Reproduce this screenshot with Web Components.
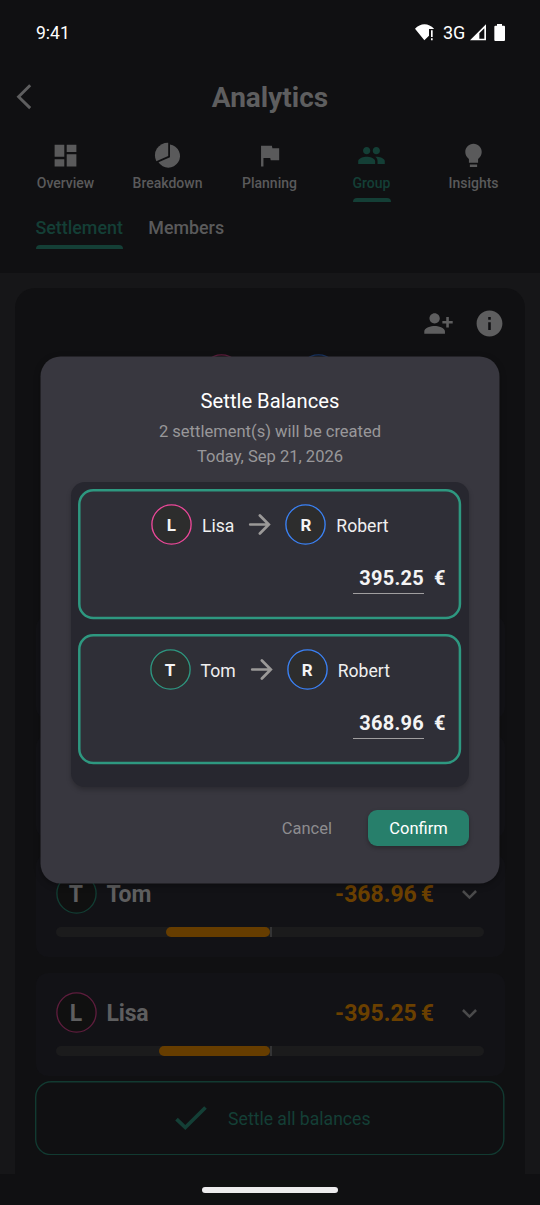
<!DOCTYPE html>
<html lang="en">
<head>
<meta charset="utf-8">
<title>Analytics</title>
<style>
html,body{margin:0;padding:0;background:#101012}
body{font-family:Roboto,"Liberation Sans",sans-serif;width:540px;height:1205px;overflow:hidden}
</style>
</head>
<body>
<analytics-screen></analytics-screen>
<script>
const define = (name, html, after) => customElements.define(name, class extends HTMLElement {
  constructor() {
    super();
    const t = document.createElement('template');
    t.innerHTML = '<style>*{box-sizing:border-box}svg{display:block;flex:none}</style>' + html;
    this.attachShadow({mode: 'open'}).append(t.content.cloneNode(true));
  }
  connectedCallback() { if (after) after(this, this.shadowRoot); }
});

const ICONS = {
  dashboard: ['0 0 24 24', '<path d="M3 13h8V3H3v10zm0 8h8v-6H3v6zm10 0h8V11h-8v10zm0-18v6h8V3h-8z"/>'],
  pie: ['459 34 87 87', '<path d="M504.500 39V79L469 95A38.5 38.5 0 0 1 504.500 39Z"/><path d="M510 44.500A35 35 0 1 1 475.500 98L510 82.500Z"/>'],
  flag: ['0 0 24 24', '<path d="M14.4 6L14 4H5v17h2v-7h5.6l.4 2h7V6z"/>'],
  people: ['0 0 24 24', '<path d="M16 11c1.66 0 2.99-1.34 2.99-3S17.66 5 16 5c-1.66 0-3 1.34-3 3s1.34 3 3 3zm-8 0c1.66 0 2.99-1.34 2.99-3S9.66 5 8 5C6.34 5 5 6.34 5 8s1.34 3 3 3zm0 2c-2.33 0-7 1.17-7 3.5V19h14v-2.5c0-2.33-4.67-3.5-7-3.5zm8 0c-.29 0-.62.02-.97.05 1.16.84 1.97 1.97 1.97 3.45V19h6v-2.5c0-2.33-4.67-3.5-7-3.5z"/>'],
  bulb: ['0 0 24 24', '<path d="M12 2.3C8.1 2.3 5.2 5.400 5.200 9.100c0 2.400 1.200 4.500 3 5.700V17.900h7.600V14.800c1.800-1.200 3-3.300 3-5.700C18.800 5.400 15.900 2.300 12 2.300zM9 19.500h6v2H9z"/>'],
  addPerson: ['0 0 24 24', '<path d="M13 8c0-2.210-1.790-4-4-4S5 5.790 5 8s1.790 4 4 4 4-1.790 4-4zm2 2v2h3v3h2v-3h3v-2h-3V7h-2v3h-3zM1 18v2h16v-2c0-2.660-5.330-4-8-4s-8 1.340-8 4z"/>'],
  info: ['0 0 24 24', '<path d="M12 2C6.480 2 2 6.480 2 12s4.480 10 10 10 10-4.480 10-10S17.520 2 12 2zm1 15h-2v-6h2v6zm0-8h-2V7h2v2z"/>'],
  arrow: ['0 0 24 24', '<path d="M4.800 12H19M12.300 5L19.200 12L12.300 19" fill="none" stroke="currentColor" stroke-width="2.100" stroke-linecap="round"/>'],
  check: ['0 0 40 40', '<path d="M5.500 21.200L14.300 29.500L34.500 9.500" fill="none" stroke="currentColor" stroke-width="3.700"/>'],
  chevron: ['0 0 24 24', '<path d="M4.500 8L12 15.500L19.500 8" fill="none" stroke="currentColor" stroke-width="2.900"/>']
};

define('ui-icon', `<style>:host{display:block;flex:none}</style><svg fill="currentColor"></svg>`, (el, r) => {
  const [box, art] = ICONS[el.getAttribute('name')];
  const svg = r.querySelector('svg'), s = el.getAttribute('size');
  svg.setAttribute('viewBox', box);
  svg.setAttribute('width', s);
  svg.setAttribute('height', s);
  svg.innerHTML = art;
});

define('status-bar', `<style>
:host{display:flex;height:65px;padding:0 35px 0 36px;align-items:center;justify-content:space-between;color:#fff;font-size:17.500px;flex:none}
.r{display:flex;align-items:center}
.n{margin:0 5px 0 9px;font-size:18px;width:22px}
</style>
<span>9:41</span>
<div class="r">
<svg width="19" height="17" viewBox="434 73 57 51" fill="#fff"><path d="M434 87C450 69 475 69 491 87L490 88H476V108L462 122Z"/><path d="M482 92h5v20h-5zM482 116h5v6h-5z"/></svg>
<span class="n">3G</span>
<svg width="16" height="17" viewBox="600 73 48 51" fill="#fff"><path fill-rule="evenodd" d="M600 122L648 74V122ZM628 101V117H643V86Z"/></svg>
<svg style="margin-left:8px" width="11" height="17" viewBox="673 72 33 51" fill="#fff"><path d="M682 72h15v5h6a3 3 0 0 1 3 3v40a3 3 0 0 1-3 3h-26a3 3 0 0 1-3-3v-40a3 3 0 0 1 3-3h5z"/></svg>
</div>`);

define('title-bar', `<style>
:host{display:grid;grid-template-columns:48px 1fr 48px;height:65px;align-items:center;flex:none;color:#5e5e5f}
h1{margin:0;font-size:28px;font-weight:700;text-align:center;line-height:34px}
</style>
<svg width="48" height="30" viewBox="0 0 48 30"><path d="M30.200 2.300L18.600 13.700L30.200 25.100" fill="none" stroke="currentColor" stroke-width="2.900"/></svg>
<h1><slot></slot></h1>`);

define('nav-tab', `<style>
:host{display:flex;flex-direction:column;align-items:center;color:#5a5a5b;width:102px}
:host([active]){color:#143f36}
span{font-size:14px;font-weight:500;line-height:16px;margin-top:5px}
i{height:4px;width:38px;margin-top:7px;border-radius:4px 4px 0 0}
:host([active]) i{background:#143f36}
</style><span><slot></slot></span><i></i>`, (el, r) => {
  const n = document.createElement('ui-icon');
  n.setAttribute('name', el.getAttribute('icon'));
  n.setAttribute('size', 29);
  r.querySelector('span').before(n);
});

define('sub-tab', `<style>
:host{display:flex;flex-direction:column;color:#5a5a5b;font-size:17.850px;font-weight:500;line-height:22px}
i{height:4px;margin-top:6px;border-radius:4px 4px 0 0}
:host([active]){color:#143f36}
:host([active]) i{background:#143f36}
</style><slot></slot><i></i>`);

define('user-avatar', `<style>
:host{display:grid;width:41px;height:41px;flex:none;color:#f4f4f4;place-items:center;font-weight:700;font-size:17px;--fill:#2d2d2d}
:host([dim]){--fill:#101010;color:#5e5e5f;font-size:23px}
svg,span{grid-area:1/1}
circle{fill:var(--fill);stroke:var(--ring)}
:host(:not([dim])) span{padding-top:1px}
:host([dim]) span{padding-top:1px}
</style><svg width="41" height="41"><circle cx="20.500" cy="20.500" r="19.600" stroke-width="1.350"/></svg><span><slot></slot></span>`);

define('member-card', `<style>
:host{display:block;height:103px;margin-bottom:16px;border-radius:12px;background:#121216;padding:19px 20px 0;flex:none}
.row{display:flex;align-items:center;height:41px;color:#5e5e5f;font-size:23px;font-weight:700}
.row user-avatar{margin-left:-.500px}
.name{margin-left:10px;flex:1;padding-top:1px;letter-spacing:-.2px}
.amt{color:#6b4000;display:flex;gap:4px;margin-right:24.500px;padding-top:1px}
ui-icon{color:#4a4a4b;margin:1px 5px 0 0}
.bar{display:grid;grid-template-columns:214px 1fr;height:10px;margin-top:13px;border-radius:5px;background:#1b1b1c;width:428px}
.fill{justify-self:end;height:10px;border-radius:5px;background:#663d00}
.mid{width:1.500px;height:10px;background:#343435}
</style>
<div class="row"><user-avatar dim></user-avatar><span class="name"></span><span class="amt"><span class="num"></span><span>€</span></span><ui-icon name="chevron" size="21"></ui-icon></div>
<div class="bar"><div class="fill"></div><div class="mid"></div></div>`, (el, r) => {
  const name = el.getAttribute('name');
  if (!name) { r.querySelectorAll('div').forEach(d => d.remove()); return; }
  r.querySelector('.name').textContent = name;
  r.querySelector('.num').textContent = el.getAttribute('amount');
  const a = r.querySelector('user-avatar');
  a.textContent = name[0];
  a.style.setProperty('--ring', el.getAttribute('ring'));
  r.querySelector('.fill').style.width = el.getAttribute('fill') + 'px';
});

define('settle-card', `<style>
:host{display:block;position:relative;height:130.400px;padding:15px 15.500px 0;margin-bottom:14.600px}
.frame{position:absolute;left:0;top:0;width:100%;height:100%}
.frame rect{x:1.300px;y:1.300px;width:calc(100% - 2.600px);height:calc(100% - 2.600px);rx:14px;fill:#2f2f37;stroke:#2e9880;stroke-width:2.500px}
.row{position:relative;display:flex;align-items:center;justify-content:center;gap:10px;color:#f0f0f0;font-size:17.600px;margin-right:.5px}
ui-icon{color:#9b9998}
.name{padding-top:2px;white-space:nowrap}
.amount{position:relative;display:flex;justify-content:flex-end;font-size:20px;font-weight:700;color:#f4f4f4;line-height:28px;margin-top:18.500px;letter-spacing:.3px}
.field{width:71px;text-align:right;border-bottom:1px solid #a09e9f;height:30px}
.cur{margin-left:10px;width:12px}
</style>
<svg class="frame"><rect/></svg>
<div class="row"><user-avatar></user-avatar><span class="name"></span><ui-icon name="arrow" size="31"></ui-icon><user-avatar style="--ring:#3b82f6">R</user-avatar><span class="name">Robert</span></div>
<div class="amount"><span class="field"></span><span class="cur">€</span></div>`, (el, r) => {
  const name = el.getAttribute('name'), a = r.querySelector('user-avatar');
  r.querySelector('.name').textContent = name;
  a.textContent = name[0];
  a.style.setProperty('--ring', el.getAttribute('ring'));
  r.querySelector('.field').textContent = el.getAttribute('amount');
});

define('settle-dialog', `<style>
:host{display:block;position:absolute;left:40px;top:356px;width:460px;height:528px;padding:33px 31px 0}
.panel{position:absolute;left:0;top:0;width:100%;height:100%;filter:drop-shadow(0 2px 3px rgba(0,0,0,.3))}
.panel rect{x:.5px;y:.5px;width:459px;height:527px;rx:20px;fill:#38373f}
h2,p,.list,.actions{position:relative}
h2{margin:0;font-size:20.200px;font-weight:400;line-height:25px;color:#fff;text-align:center}
p{margin:5px 0 0;font-size:16.550px;line-height:25px;color:#98979a;text-align:center}
.list{margin-top:13px;height:304.500px;border-radius:14px;background:#27272f;padding:7.400px;box-shadow:0 3px 5px rgba(0,0,0,.22)}
.actions{display:flex;justify-content:flex-end;align-items:center;margin-top:23.500px;font-size:16.500px}
.cancel{color:#8d8c8f;margin-right:36px;padding-top:2px}
.ok{width:101px;height:35.500px;border-radius:9px;background:#277f6b;color:#fff;display:flex;align-items:center;justify-content:center;padding-top:2px;box-shadow:0 2px 4px rgba(0,0,0,.28)}
</style>
<svg class="panel"><rect/></svg>
<h2>Settle Balances</h2>
<p>2 settlement(s) will be created<br>Today, Sep 21, 2026</p>
<div class="list">
<settle-card name="Lisa" amount="395.25" ring="#ec4899"></settle-card>
<settle-card name="Tom" amount="368.96" ring="#2e9880"></settle-card>
</div>
<div class="actions"><span class="cancel">Cancel</span><span class="ok">Confirm</span></div>`);

define('settle-button', `<style>
:host{display:flex;position:relative;flex:none;height:74.400px;margin:-11.200px 0 0 -.7px;width:469.500px;color:#143f36;font-size:17.600px;align-items:center}
.frame{position:absolute;left:0;top:0;width:100%;height:100%}
.frame rect{x:.7px;y:.7px;width:calc(100% - 1.400px);height:calc(100% - 1.400px);rx:15.500px;fill:#101012;stroke:#123a31;stroke-width:1.400px}
ui-icon,span{position:relative}
ui-icon{margin:0 17.300px 0 135.500px}
span{padding-top:1.500px}
</style><svg class="frame"><rect/></svg><ui-icon name="check" size="40"></ui-icon><span><slot></slot></span>`);

define('analytics-screen', `<style>
:host{display:flex;flex-direction:column;position:relative;width:540px;height:1205px;background:#101012;overflow:hidden}
.tabs{display:flex;padding:11px 14.500px 0;height:87px;flex:none}
.sub{display:flex;gap:25.500px;padding-left:35.500px;height:56px;flex:none}
.body{background:#161618;height:901px;padding:15px 15px 0;flex:none}
.card{height:886px;border-radius:20px 20px 0 0;background:#101012;padding:20px 20.500px 0 21px;display:flex;flex-direction:column}
.tools{display:flex;gap:20px;justify-content:flex-end;color:#5e5e5f;height:45.500px}
.pair{display:flex;gap:56px;padding-left:165px;height:262.500px;flex:none}
.home{flex:1;display:flex;justify-content:center;padding-top:13px}
.home i{width:136px;height:6px;border-radius:3px;background:#edebee}
</style>
<status-bar></status-bar>
<title-bar>Analytics</title-bar>
<div class="tabs">
<nav-tab icon="dashboard">Overview</nav-tab><nav-tab icon="pie">Breakdown</nav-tab><nav-tab icon="flag">Planning</nav-tab><nav-tab icon="people" active>Group</nav-tab><nav-tab icon="bulb">Insights</nav-tab>
</div>
<div class="sub"><sub-tab active>Settlement</sub-tab><sub-tab>Members</sub-tab></div>
<div class="body"><div class="card">
<div class="tools"><ui-icon name="addPerson" size="31"></ui-icon><ui-icon name="info" size="31"></ui-icon></div>
<div class="pair"><user-avatar dim style="--ring:#5e1d3d"></user-avatar><user-avatar dim style="--ring:#183462"></user-avatar></div>
<member-card></member-card>
<member-card></member-card>
<member-card name="Tom" amount="-368.96" ring="#123d33" fill="104"></member-card>
<member-card name="Lisa" amount="-395.25" ring="#5e1d3d" fill="111"></member-card>
<settle-button>Settle all balances</settle-button>
</div></div>
<div class="home"><i></i></div>
<settle-dialog></settle-dialog>`);
</script>
</body>
</html>
